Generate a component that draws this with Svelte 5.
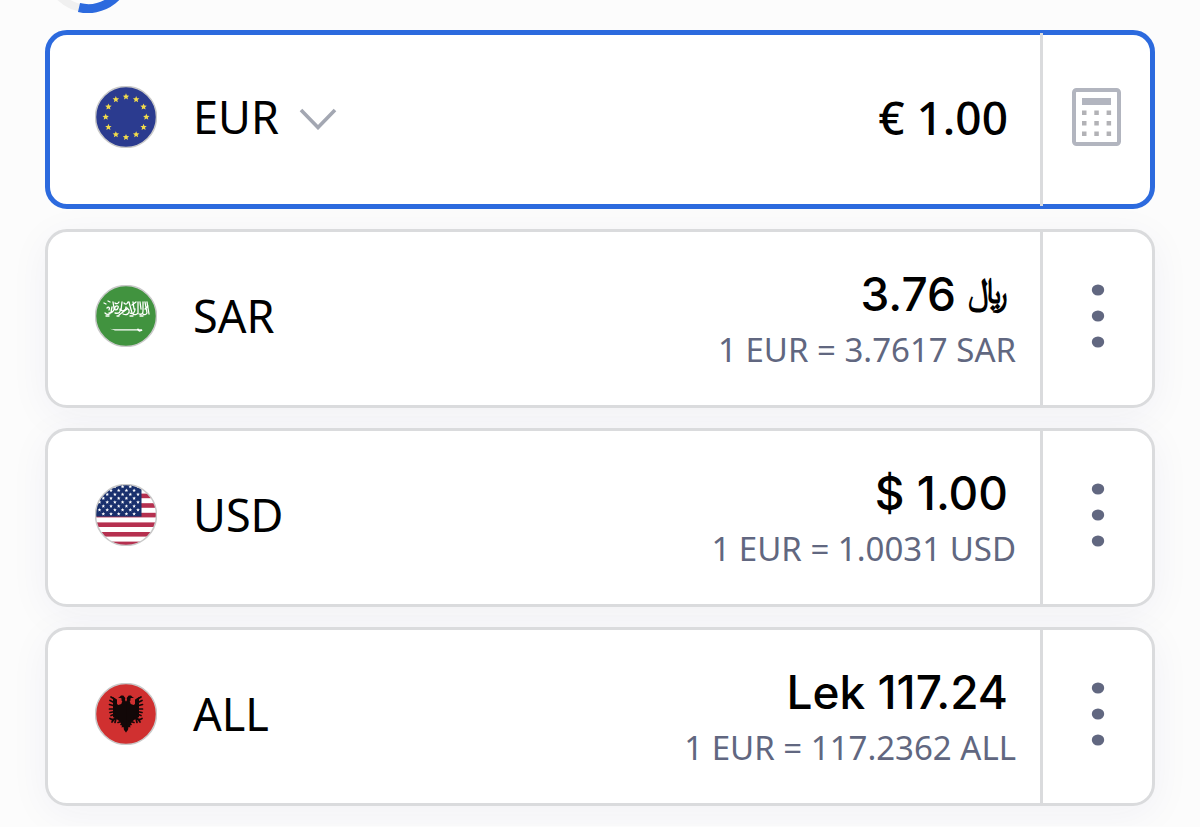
<script>
  let base = $state('EUR');
  let amount = $state('€ 1.00');

  const rates = [
    { code: 'SAR', amount: '3.76', suffix: '﷼', rate: '1 EUR = 3.7617 SAR' },
    { code: 'USD', amount: '$ 1.00', suffix: '', rate: '1 EUR = 1.0031 USD' },
    { code: 'ALL', amount: 'Lek 117.24', suffix: '', rate: '1 EUR = 117.2362 ALL' }
  ];

  // Five-pointed star as an SVG points list.
  function star(cx, cy, r) {
    return Array.from({ length: 10 }, (_, i) => {
      const a = (i * Math.PI) / 5 - Math.PI / 2;
      const q = i % 2 ? r * 0.45 : r;
      return `${(cx + q * Math.cos(a)).toFixed(2)},${(cy + q * Math.sin(a)).toFixed(2)}`;
    }).join(' ');
  }

  const euStars = Array.from({ length: 12 }, (_, i) => {
    const a = (i * Math.PI) / 6;
    return star(31 + 20.3 * Math.sin(a), 31 - 20.3 * Math.cos(a), 3.4);
  });

  const usStars = [];
  for (let row = 0; row < 8; row++) {
    for (let col = 0; col < 6; col++) {
      const x = 4.5 + col * 7.7 + (row % 2 ? 3.8 : 0);
      if (x < 45) usStars.push(star(x, 2.6 + row * 3.9, 1.9));
    }
  }
</script>

{#snippet flag(code)}
  <svg class="flag" viewBox="0 0 62 62" aria-hidden="true">
    <defs>
      <clipPath id="disc-{code}"><circle cx="31" cy="31" r="30.5" /></clipPath>
    </defs>
    <g clip-path="url(#disc-{code})">
      {#if code === 'EUR'}
        <rect width="62" height="62" fill="#2b3b8f" />
        {#each euStars as points}
          <polygon {points} fill="#f3dc4b" />
        {/each}
      {:else if code === 'SAR'}
        <rect width="62" height="62" fill="#41933f" />
        <g fill="none" stroke="#fff" stroke-linecap="round" stroke-linejoin="round" stroke-width="1.3">
          <path d="M10 28c2 2 5 2 6-1l1-5M12 23c2-2 3 0 2 2M9 18l2 1m2-3 2 1M18 17l1 6c1 3-3 5-5 5M20 28c4 1 6-1 5-4m-5-2c2-2 4-1 3 1-1 3-4 2-3 0M20 18c1 1 3 1 4-1M27 17l-1 8c2 2 5 0 5-3M24 30l8-6M29 18c2 2 3 1 4-1M28 29c4 2 7-1 6-4l-2-2m2-6 3 11m-2 0c3 2 5-1 5-4M38 17l1 7m-2-4 4-3M43 17v11c-1 2-4 2-5 1M44 29c3 1 4-1 4-3V17m-3 0 1 7m4-7 2 11c-1 2-3 2-4 1M50 24l3-3m-1-4 2 12M11 31h3m8 0h2m11 0h3m7 0h3" />
        </g>
        <path d="M15 43.8l3 .4h24l1-1 1 1h3l.4 1.600-3 1-2-1.300H20z" fill="#fff" />
      {:else if code === 'USD'}
        <rect width="62" height="62" fill="#fff" />
        {#each Array.from({ length: 7 }, (_, i) => i) as i}
          <rect y={i * 9.6} width="62" height="4.6" fill="#b5304f" />
        {/each}
        <rect width="46.5" height="32.6" fill="#19306d" />
        {#each usStars as points}
          <polygon {points} fill="#fff" />
        {/each}
      {:else}
        <rect width="62" height="62" fill="#d03030" />
        {#each [1, -1] as side}
          <g transform="translate(31 0) scale({side} 1)">
            <path
              fill="#120808"
              d="M-.2 19l1.200-2-.3-2 2-2.500 2.300 0 1.500 1.500 1.500 1-2.700 0-1.300 1 1 1-1.300 1 1 3 3 1 1.300-1V17l4-3v20l-5 3-3 3 1 2-2 .5 .5 2-2-.5-.5 3-2.200 2.500z"
            />
            <path
              fill="none"
              stroke="#120808"
              stroke-width="1.7"
              stroke-linecap="round"
              d="M10 17l5-3M11 20l5-2.500M11 23l5.500-1.500M11 26h5.500M11 28.500l5 1M11 31l4 1.500M8 35l6 1.500 2-1M12 36l2 3M10 35.500l1 4M3 38l5 1.500"
            />
          </g>
        {/each}
      {/if}
    </g>
    <circle class="rim" cx="31" cy="31" r="30.5" />
  </svg>
{/snippet}

<header class="status">
  <svg class="ring" viewBox="40 0 100 14" role="img" aria-label="Refreshing">
    <circle cx="88" cy="-31" r="39.500" fill="none" stroke="#f0f0f0" stroke-width="8" />
    <path d="M79 7.500A39.500 39.500 0 0 0 127.500-31" fill="none" stroke="#2c6ade" stroke-width="9" />
  </svg>
</header>

<main class="list">
  <section class="card active">
    <div class="body">
      {@render flag('EUR')}
      <label class="picker">
        <select class="code" bind:value={base} aria-label="Base currency">
          <option>EUR</option>
          <option>SAR</option>
          <option>USD</option>
          <option>ALL</option>
        </select>
        <svg class="chevron" viewBox="0 0 38 26" aria-hidden="true">
          <path d="M2 6l17 17.500L36 6" fill="none" stroke="#a3a7b2" stroke-width="3.600" />
        </svg>
      </label>
      <input class="amount entry" bind:value={amount} aria-label="Amount" />
    </div>
    <button class="side" aria-label="Calculator">
      <svg class="calc" viewBox="0 0 49 58" aria-hidden="true">
        <rect x="2" y="2" width="45" height="54" rx="2.500" fill="none" stroke="#b2b5bf" stroke-width="4" />
        <rect x="10" y="10" width="29" height="7" fill="#b2b5bf" />
        {#each [22.5, 33, 43.5] as y}
          {#each [10, 22.3, 34.6] as x}
            <rect {x} {y} width="4.500" height="4.500" fill="#b2b2b6" />
          {/each}
        {/each}
      </svg>
    </button>
  </section>

  {#each rates as item}
    <section class="card">
      <div class="body">
        {@render flag(item.code)}
        <span class="code">{item.code}</span>
        <div class="values">
          <div class="amount">
            <span>{item.amount}</span>
            {#if item.suffix}<span class="sign" lang="ar">{item.suffix}</span>{/if}
          </div>
          <div class="rate">{item.rate}</div>
        </div>
      </div>
      <button class="side" aria-label="{item.code} options">
        <svg class="dots" viewBox="0 0 14 66" aria-hidden="true">
          <ellipse cx="7" cy="7" rx="6.200" ry="5.500" />
          <ellipse cx="7" cy="33" rx="6.200" ry="5.500" />
          <ellipse cx="7" cy="59" rx="6.200" ry="5.500" />
        </svg>
      </button>
    </section>
  {/each}
</main>

<style>
  :global(body) {
    background: #fcfcfc;
    color: #000;
    font-family: 'Noto Sans', sans-serif;
  }

  .status {
    height: 30px;
    padding-left: 40px;
  }

  .ring {
    display: block;
    width: 100px;
    height: 14px;
  }

  .list {
    display: flex;
    flex-direction: column;
    gap: 20px;
    padding: 0 45px 20px;
  }

  .card {
    box-sizing: border-box;
    display: grid;
    grid-template-columns: 1fr 112px;
    min-height: 179px;
    border: 3px solid #dadbdd;
    border-radius: 22px;
    background: #fff;
    box-shadow: 0 8px 40px rgba(35, 35, 110, 0.05);
  }

  .active {
    grid-template-columns: 1fr 110px;
    border: 5px solid #2c6ade;
    box-shadow: none;
  }

  .body {
    display: flex;
    align-items: center;
    min-width: 0;
    padding: 0 24px 6px 47px;
  }

  .active .body {
    padding-left: 45px;
  }

  .flag {
    flex: none;
    width: 62px;
    height: 62px;
    margin-right: 36px;
  }

  .rim {
    fill: none;
    stroke: #c9c9c9;
    stroke-width: 1.5;
  }

  .code {
    font-family: 'Noto Sans', sans-serif;
    font-size: 45px;
    line-height: 60px;
  }

  .picker {
    display: flex;
    align-items: center;
    gap: 20px;
  }

  select.code {
    appearance: none;
    field-sizing: content;
    padding: 0;
    border: 0;
    background: none;
    color: inherit;
  }

  .chevron {
    width: 38px;
    height: 26px;
  }

  .amount {
    font-family: Inter, 'Noto Sans', sans-serif;
    font-size: 46px;
    font-weight: 500;
    line-height: 56px;
  }

  .entry {
    flex: 1;
    min-width: 0;
    padding: 0 8px 0 0;
    border: 0;
    outline: 0;
    background: none;
    color: inherit;
    font-family: 'Noto Sans', sans-serif;
    text-align: right;
  }

  .values {
    flex: 1;
    padding-top: 12px;
    text-align: right;
  }

  .values .amount {
    display: flex;
    justify-content: flex-end;
    gap: 12px;
    padding-right: 8px;
  }

  .sign {
    font-family: 'DejaVu Sans', sans-serif;
    font-size: 36px;
    font-weight: 700;
    line-height: 50px;
  }

  .rate {
    color: #616780;
    font-size: 33px;
    line-height: 56px;
  }

  .side {
    display: flex;
    align-items: center;
    justify-content: center;
    padding: 0 0 6px;
    border: 0;
    border-left: 3px solid #dadbdd;
    background: none;
  }

  .active .side {
    margin: -2px 0;
  }

  .calc {
    width: 49px;
    height: 58px;
  }

  .dots {
    width: 14px;
    height: 66px;
    fill: #616780;
  }
</style>
